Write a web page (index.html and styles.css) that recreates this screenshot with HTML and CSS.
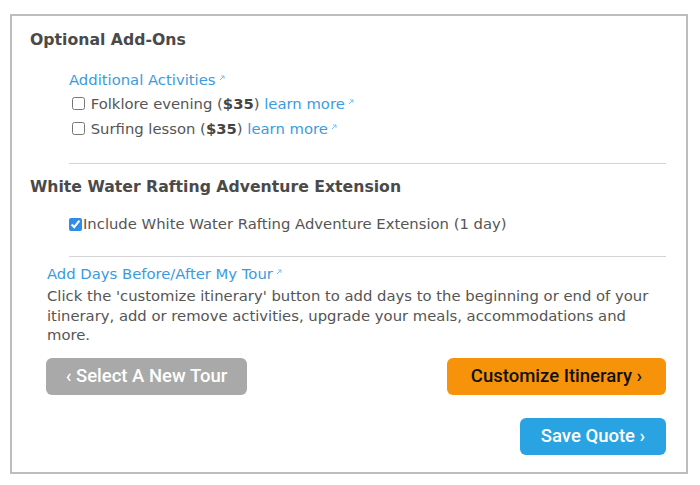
FILE: index.html
```html
<!DOCTYPE html>
<html>
<head>
<meta charset="utf-8">
<link rel="stylesheet" href="styles.css">
</head>
<body>
<div class="panel">
  <h2 class="title">Optional Add-Ons</h2>
  <div class="group">
    <a class="link">Additional Activities<svg class="ext" viewBox="0 0 6 6"><path d="M1 5 L5 1 M2.2 1 H5 V3.8" /></svg></a>
    <label class="opt"><input type="checkbox"> Folklore evening (<b>$35</b>) <a class="link">learn more<svg class="ext" viewBox="0 0 6 6"><path d="M1 5 L5 1 M2.2 1 H5 V3.8" /></svg></a></label>
    <label class="opt"><input type="checkbox"> Surfing lesson (<b>$35</b>) <a class="link">learn more<svg class="ext" viewBox="0 0 6 6"><path d="M1 5 L5 1 M2.2 1 H5 V3.8" /></svg></a></label>
  </div>
  <hr class="rule">
  <h2 class="title title2">White Water Rafting Adventure Extension</h2>
  <div class="group">
    <label class="opt inc"><input type="checkbox" checked>Include White Water Rafting Adventure Extension (1 day)</label>
  </div>
  <hr class="rule rule2">
  <div class="days">
    <a class="link">Add Days Before/After My Tour<svg class="ext" viewBox="0 0 6 6"><path d="M1 5 L5 1 M2.2 1 H5 V3.8" /></svg></a>
    <p class="desc">Click the 'customize itinerary' button to add days to the beginning or end of your itinerary, add or remove activities, upgrade your meals, accommodations and more.</p>
  </div>
  <div class="actions">
    <button class="btn gray">&lsaquo; Select A New Tour</button>
    <button class="btn orange">Customize Itinerary &rsaquo;</button>
  </div>
  <div class="actions end">
    <button class="btn blue">Save Quote &rsaquo;</button>
  </div>
</div>
</body>
</html>
```

FILE: styles.css
```css
html, body {
  margin: 0;
  padding: 0;
  background: #fff;
}
body {
  font-family: "DejaVu Sans", Verdana, sans-serif;
  color: #555;
  font-size: 14.8px;
}
.panel {
  margin: 14px 0 0 10px;
  border: 2px solid #bdbdbd;
  padding: 0 20px 0 18px;
  width: 636px;
  height: 456px;
}
.title {
  margin: 14px 0 0;
  font-size: 15.7px;
  line-height: 20px;
  font-weight: bold;
  color: #4a4a4a;
}
.title2 {
  margin-top: 13px;
}
.group {
  margin-left: 39px;
  display: flex;
  flex-direction: column;
  align-items: flex-start;
}
.group > .link {
  margin-top: 19px;
  line-height: 22px;
}
.link {
  color: #3a9be0;
  text-decoration: none;
  cursor: pointer;
}
.ext {
  width: 6px;
  height: 6px;
  margin-left: 3px;
  vertical-align: 4px;
  fill: none;
  stroke: #7cc0ee;
  stroke-width: 1;
}
.opt {
  display: flex;
  align-items: center;
  white-space: pre;
  line-height: 25px;
}
.opt b {
  color: #444;
}
.opt input {
  margin: 0 1px 0 3px;
  width: 13px;
  height: 13px;
  accent-color: #2f8ce8;
}
.opt.inc {
  margin-top: 17px;
  line-height: 20px;
}
.opt.inc input {
  margin: 0 1px 0 0;
}
.rule {
  margin: 22px 0 0 39px;
  border: 0;
  border-top: 1px solid #d4d4d4;
  height: 0;
}
.rule2 {
  margin-top: 22px;
}
.days {
  margin: 7px 0 0 17px;
}
.days .link {
  display: block;
  line-height: 20px;
}
.desc {
  margin: 2px 0 0;
  line-height: 19.5px;
}
.actions {
  display: flex;
  justify-content: space-between;
  margin: 13px 0 0 16px;
}
.actions.end {
  justify-content: flex-end;
  margin-top: 23px;
}
.btn {
  border: 0;
  border-radius: 6px;
  height: 37px;
  font-family: Roboto, "Open Sans", sans-serif;
  font-weight: 500;
  font-size: 18.5px;
  padding: 0;
  cursor: pointer;
}
.gray {
  width: 201px;
  background: #a9a9a9;
  color: #fff;
}
.orange {
  width: 219px;
  background: #f7930a;
  color: #111;
}
.blue {
  width: 146px;
  background: #2aa3e2;
  color: #fff;
}
```
